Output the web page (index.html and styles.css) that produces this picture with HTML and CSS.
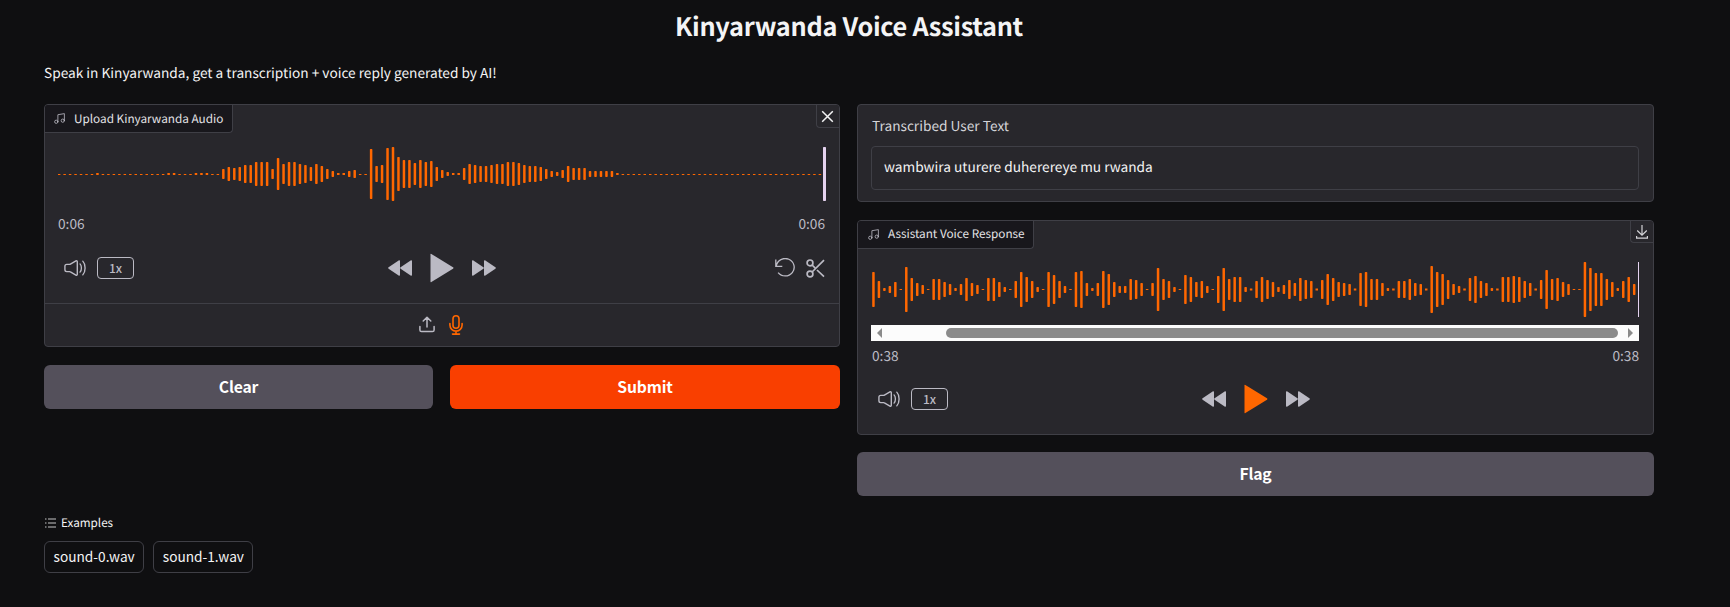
FILE: index.html
```html
<!DOCTYPE html>
<html lang="en">
<head>
<meta charset="utf-8">
<title>Kinyarwanda Voice Assistant</title>
<link rel="stylesheet" href="styles.css">
</head>
<body>
<svg class="defs" width="0" height="0">
  <symbol id="music" viewBox="0 0 24 24"><g fill="none" stroke="currentColor" stroke-width="1.5" stroke-linecap="round" stroke-linejoin="round"><path d="M9 18V5l12-2v13"/><circle cx="6" cy="18" r="3"/><circle cx="18" cy="16" r="3"/></g></symbol>
  <symbol id="volume" viewBox="0 0 24 24"><g fill="none" stroke="currentColor" stroke-width="1.5"><path d="M1 13.9V10.1C1 9 1.9 8.1 3 8.1H5.9c.4 0 .8-.1 1.100-.3L13 4.300c.7-.4 1.500 0 1.500.7V19c0 .7-.8 1.100-1.500.7L7 16.200c-.3-.2-.7-.3-1.100-.3H3c-1.100 0-2-.9-2-2Z"/><path stroke-linecap="round" d="M17.500 7.500s1.500 1.500 1.500 4.500-1.500 4.500-1.500 4.500M20.500 4.500S23 7 23 12s-2.500 7.500-2.500 7.500"/></g></symbol>
  <symbol id="rewind" viewBox="0 0 24 16"><path fill="currentColor" d="M11 0.300Q12 0 12 1.200V14.800Q12 16 11 15.700L.6 8.700Q-.3 8 .6 7.300ZM23 0.300Q24 0 24 1.200V14.800Q24 16 23 15.700L12.600 8.700Q11.700 8 12.600 7.300Z"/></symbol>
  <symbol id="play" viewBox="0 0 24 30"><path fill="currentColor" d="M.5 1.400Q.5.5 1.400 1L23 14.300Q24 15 23 15.700L1.400 29Q.5 29.500.5 28.600Z"/></symbol>
</svg>
<main class="app">
  <h1 class="title">Kinyarwanda Voice Assistant</h1>
  <p class="intro">Speak in Kinyarwanda, get a transcription + voice reply generated by AI!</p>

  <div class="columns">
    <section class="column">
      <div class="card upload">
        <div class="card-top">
          <div class="tab"><svg class="tab-icon"><use href="#music"/></svg>Upload Kinyarwanda Audio</div>
          <button class="corner" aria-label="Close"><svg width="13" height="13" viewBox="0 0 13 13"><path d="M1.200 1.200 11.800 11.800M11.800 1.200 1.200 11.800" stroke="currentColor" stroke-width="1.500"/></svg></button>
        </div>
        <div class="wave wave-input"><svg id="wave-input" width="768" height="54"></svg></div>
        <div class="times"><span>0:06</span><span>0:06</span></div>
        <div class="controls">
          <div class="group left"><svg class="vol"><use href="#volume"/></svg><button class="speed">1x</button></div>
          <div class="group center"><svg class="skip"><use href="#rewind"/></svg><svg class="play"><use href="#play"/></svg><svg class="skip flip"><use href="#rewind"/></svg></div>
          <div class="group right">
            <svg width="21" height="20" viewBox="0 0 21 20" fill="none" stroke="currentColor" stroke-width="1.300"><path d="M.8 1.500V8.300H7.300M1.300 7.800A9 8.700 0 1 1 3.100 14.600"/></svg>
            <svg width="19" height="19" viewBox="0 0 19 19" fill="none" stroke="currentColor" stroke-width="1.700"><circle cx="4" cy="3.900" r="2.900"/><circle cx="4" cy="15" r="2.900"/><path d="M18 1.200 6.100 13M6.100 6 9 8.800M11 11 18 17.700"/></svg>
          </div>
        </div>
        <div class="sources">
          <svg width="16" height="17" viewBox="0 0 16 17" fill="none" stroke="currentColor" stroke-width="1.500" stroke-linecap="round" stroke-linejoin="round"><path d="M.9 10.500V14Q.9 15.600 2.500 15.600H13.500Q15.100 15.600 15.100 14V10.500M8 11V1.200M4.200 5 8 1.200 11.800 5"/></svg>
          <svg class="mic" width="14" height="20" viewBox="0 0 14 20" fill="none" stroke="currentColor" stroke-width="1.600" stroke-linecap="round"><rect x="4" y=".8" width="6" height="12.400" rx="3"/><path d="M.9 8.500V10a6.100 6.100 0 0 0 12.200 0V8.500M7 16.200V19M3.500 19.100H10.500"/></svg>
        </div>
      </div>
      <div class="actions">
        <button class="btn">Clear</button>
        <button class="btn primary">Submit</button>
      </div>
    </section>

    <section class="column">
      <div class="card textbox">
        <label class="field-label">Transcribed User Text</label>
        <div class="field">wambwira uturere duherereye mu rwanda</div>
      </div>
      <div class="card response">
        <div class="card-top">
          <div class="tab"><svg class="tab-icon"><use href="#music"/></svg>Assistant Voice Response</div>
          <button class="corner small" aria-label="Download"><svg width="12" height="14" viewBox="0 0 12 14" fill="none" stroke="currentColor" stroke-width="1.200"><path d="M6 0V10M1.200 5.500 6 10.200 10.800 5.500M.6 11V13.200H11.400V11"/></svg></button>
        </div>
        <div class="wave wave-output"><svg id="wave-output" width="768" height="55"></svg></div>
        <div class="scrollbar"><i class="arrow"></i><i class="thumb"></i><i class="arrow next"></i></div>
        <div class="times"><span>0:38</span><span>0:38</span></div>
        <div class="controls">
          <div class="group left"><svg class="vol"><use href="#volume"/></svg><button class="speed">1x</button></div>
          <div class="group center"><svg class="skip"><use href="#rewind"/></svg><svg class="play accent"><use href="#play"/></svg><svg class="skip flip"><use href="#rewind"/></svg></div>
          <div class="group right"></div>
        </div>
      </div>
      <button class="btn flag">Flag</button>
    </section>
  </div>

  <div class="examples-label"><svg width="11" height="10" viewBox="0 0 11 10" stroke="currentColor" stroke-width="1"><path d="M3 1H11M3 5H11M3 9H11M0 1H1.500M0 5H1.500M0 9H1.500" opacity=".8"/></svg>Examples</div>
  <div class="examples"><button class="chip">sound-0.wav</button><button class="chip">sound-1.wav</button></div>
</main>
<script src="script.js"></script>
</body>
</html>
```
FILE: styles.css
```css
* { box-sizing: border-box; }
body {
  margin: 0;
  height: 607px;
  overflow: hidden;
  background: #0f0f11;
  color: #f4f4f5;
  font-family: "Noto Sans CJK SC", "Noto Sans", sans-serif;
  font-size: 13.700px;
  text-rendering: geometricPrecision;
}
button { font-family: inherit; color: inherit; margin: 0; padding: 0; }
svg { display: block; flex: none; }
.defs { position: absolute; }
.app { padding: 0 76px 0 44px; }
.title { margin: 0; padding-top: 6px; height: 58px; font-size: 25.300px; letter-spacing: -0.300px; line-height: 40px; font-weight: 600; text-align: center; color: #f4f4f5; }
.intro { margin: 0; height: 46px; line-height: 28px; font-size: 13.680px; }
.columns { display: grid; grid-template-columns: 796px 797px; gap: 17px; height: 392px; }
.column { min-width: 0; }
.card { border: 1px solid #3f3f46; border-radius: 4px; background: #28272c; overflow: hidden; }
.upload { height: 243px; }
.card-top { display: flex; justify-content: space-between; align-items: flex-start; height: 28px; }
.tab { display: flex; align-items: center; height: 28px; padding: 0 9px 1px 8px; border: solid #3f3f46; border-width: 0 1px 1px 0; border-bottom-right-radius: 4px; background: #18171c; font-size: 11.750px; color: #e4e4e7; white-space: nowrap; }
.response .tab { padding: 0 8px 2px 9px; }
.tab-icon { width: 13px; height: 13px; margin: 1px 8px 0 0; color: #bbbac4; }
.corner { display: grid; place-items: center; width: 23px; height: 23px; padding-right: 1px; background: #28272c; border: solid #3f3f46; border-width: 0 0 1px 1px; border-bottom-left-radius: 4px; color: #f4f4f5; }
.corner.small { height: 22px; color: #d4d4d8; }
.wave { margin-left: 13px; width: 768px; }
.wave-input { margin-top: 14px; }
.wave-output { margin-top: 13px; }
.times { display: flex; justify-content: space-between; padding: 0 14px 0 13px; height: 30px; line-height: 28px; font-size: 13.700px; color: #bbbac4; }
.upload .times { margin-top: 8px; }
.controls { display: grid; grid-template-columns: 1fr auto 1fr; align-items: center; height: 30px; margin-top: 14px; padding: 0 14px 0 19px; color: #bbbac4; }
.group { display: flex; align-items: center; }
.right { justify-content: flex-end; gap: 10px; }
.center { gap: 18px; transform: translateX(-3px); }
.vol { width: 22px; height: 22px; }
.speed { width: 37px; height: 22px; margin-left: 11px; border: 1px solid #bbbac4; border-radius: 4px; background: none; color: #bbbac4; font-size: 12px; line-height: 18px; font-weight: 500; }
.skip { width: 24px; height: 16px; }
.flip { transform: scaleX(-1); }
.play { width: 24px; height: 30px; }
.accent { color: #ff6700; }
.sources { display: flex; justify-content: center; align-items: center; gap: 14px; height: 43px; margin-top: 20px; padding: 0 3px 1px 0; border-top: 1px solid #3f3f46; color: #bbbac4; }
.mic { color: #ff6700; }
.actions { display: grid; grid-template-columns: 389px 390px; gap: 17px; margin-top: 18px; }
.btn { width: 100%; height: 44px; padding-bottom: 2px; border: 0; border-radius: 6px; background: #54505b; color: #fff; font-size: 15.700px; letter-spacing: -0.180px; font-weight: 600; }
.primary { background: #f93f00; }
.textbox { height: 98px; padding: 9px 14px 0 13px; }
.field-label { display: block; height: 32px; padding-left: 1px; line-height: 23px; font-size: 13.700px; color: #d4d4d8; }
.field { height: 44px; border: 1px solid #3f3f46; border-radius: 4px; padding-left: 12px; line-height: 38px; font-size: 13.680px; }
.response { height: 215px; margin-top: 18px; }
.scrollbar { display: flex; align-items: center; height: 16px; margin: 8px 14px 0 13px; padding: 0 6px; background: #fcfcfc; }
.arrow { border: solid transparent; border-width: 5px 5px 5px 0; border-right-color: #8b8b8b; }
.arrow.next { transform: scaleX(-1); }
.thumb { flex: 1; height: 10px; margin: 0 10px 0 64px; border-radius: 5px; background: #8b8b8b; }
.response .times { margin-top: 0; padding-left: 14px; }
.response .controls { margin-top: 13px; padding-left: 20px; }
.flag { margin-top: 17px; }
.examples-label { display: flex; align-items: center; gap: 5px; height: 45px; padding: 9px 0 0 1px; font-size: 11.700px; line-height: 20px; }
.examples { display: flex; gap: 9px; }
.chip { height: 32px; padding: 0 8.500px 3px; border: 1px solid #3f3f46; border-radius: 6px; background: none; font-size: 13.680px; line-height: 28px; }
```
FILE: script.js
```js
const PITCH = 5.473;
const flat = (n) => Array(n).fill(1);

const inputLevels = [
  ...flat(7), 2, ...flat(12), 2, 2, 1, 1, 1, 2, 2, 2, 1, 1,
  10, 14, 12, 14, 18, 18, 24, 24, 24, 10, 32, 20, 24, 24, 20, 18, 14, 20, 16, 10,
  6, 2, 2, 6, 8, 1, 1, 50, 16, 18, 52, 54, 34, 28, 28, 22, 28, 24, 26, 14,
  8, 4, 2, 2, 12, 20, 18, 16, 16, 18, 20, 20, 24, 24, 22, 18, 16, 16, 14, 10,
  6, 4, 8, 16, 12, 12, 12, 6, 6, 6, 6, 6, 2, ...flat(37),
];

const outputLevels = [
  35, 17, 3, 7, 15, 1, 45, 23, 13, 9, 1, 21, 21, 15, 11, 3, 11, 23, 13, 9,
  1, 23, 23, 15, 5, 1, 17, 35, 25, 17, 5, 1, 35, 29, 17, 7, 1, 35, 37, 13,
  3, 13, 37, 31, 15, 7, 7, 21, 19, 13, 1, 13, 43, 21, 17, 5, 1, 29, 25, 15,
  17, 7, 1, 27, 43, 21, 25, 25, 5, 2, 17, 25, 19, 15, 5, 9, 19, 13, 23, 19,
  17, 2, 19, 31, 23, 15, 13, 11, 2, 33, 35, 21, 21, 13, 3, 2, 17, 17, 21, 13,
  11, 2, 47, 35, 31, 19, 11, 7, 2, 23, 27, 17, 13, 3, 2, 25, 25, 27, 25, 17,
  13, 2, 19, 39, 21, 23, 15, 11, 1, 1, 55, 43, 33, 33, 21, 15, 3, 17, 25, 11,
];

function drawWave(id, levels, offset, center, cursorX, cursorWidth) {
  const svg = document.getElementById(id);
  const add = (x, y, width, height, fill) => {
    const rect = document.createElementNS("http://www.w3.org/2000/svg", "rect");
    const attrs = { x, y, width, height, fill, rx: width > 1 && height > 2 ? 0.7 : 0 };
    for (const [name, value] of Object.entries(attrs)) rect.setAttribute(name, value);
    svg.appendChild(rect);
  };
  levels.forEach((level, i) => {
    const y = level === 1 ? Math.floor(center) : center - level / 2;
    add(offset + i * PITCH, y, 2.5, level, "#ff6700");
  });
  add(cursorX, 0, cursorWidth, svg.height.baseVal.value, "#e5d3f0");
}

drawWave("wave-input", inputLevels, -0.1, 27, 765, 3);
drawWave("wave-output", outputLevels, 1.2, 27.5, 767, 1);
```
